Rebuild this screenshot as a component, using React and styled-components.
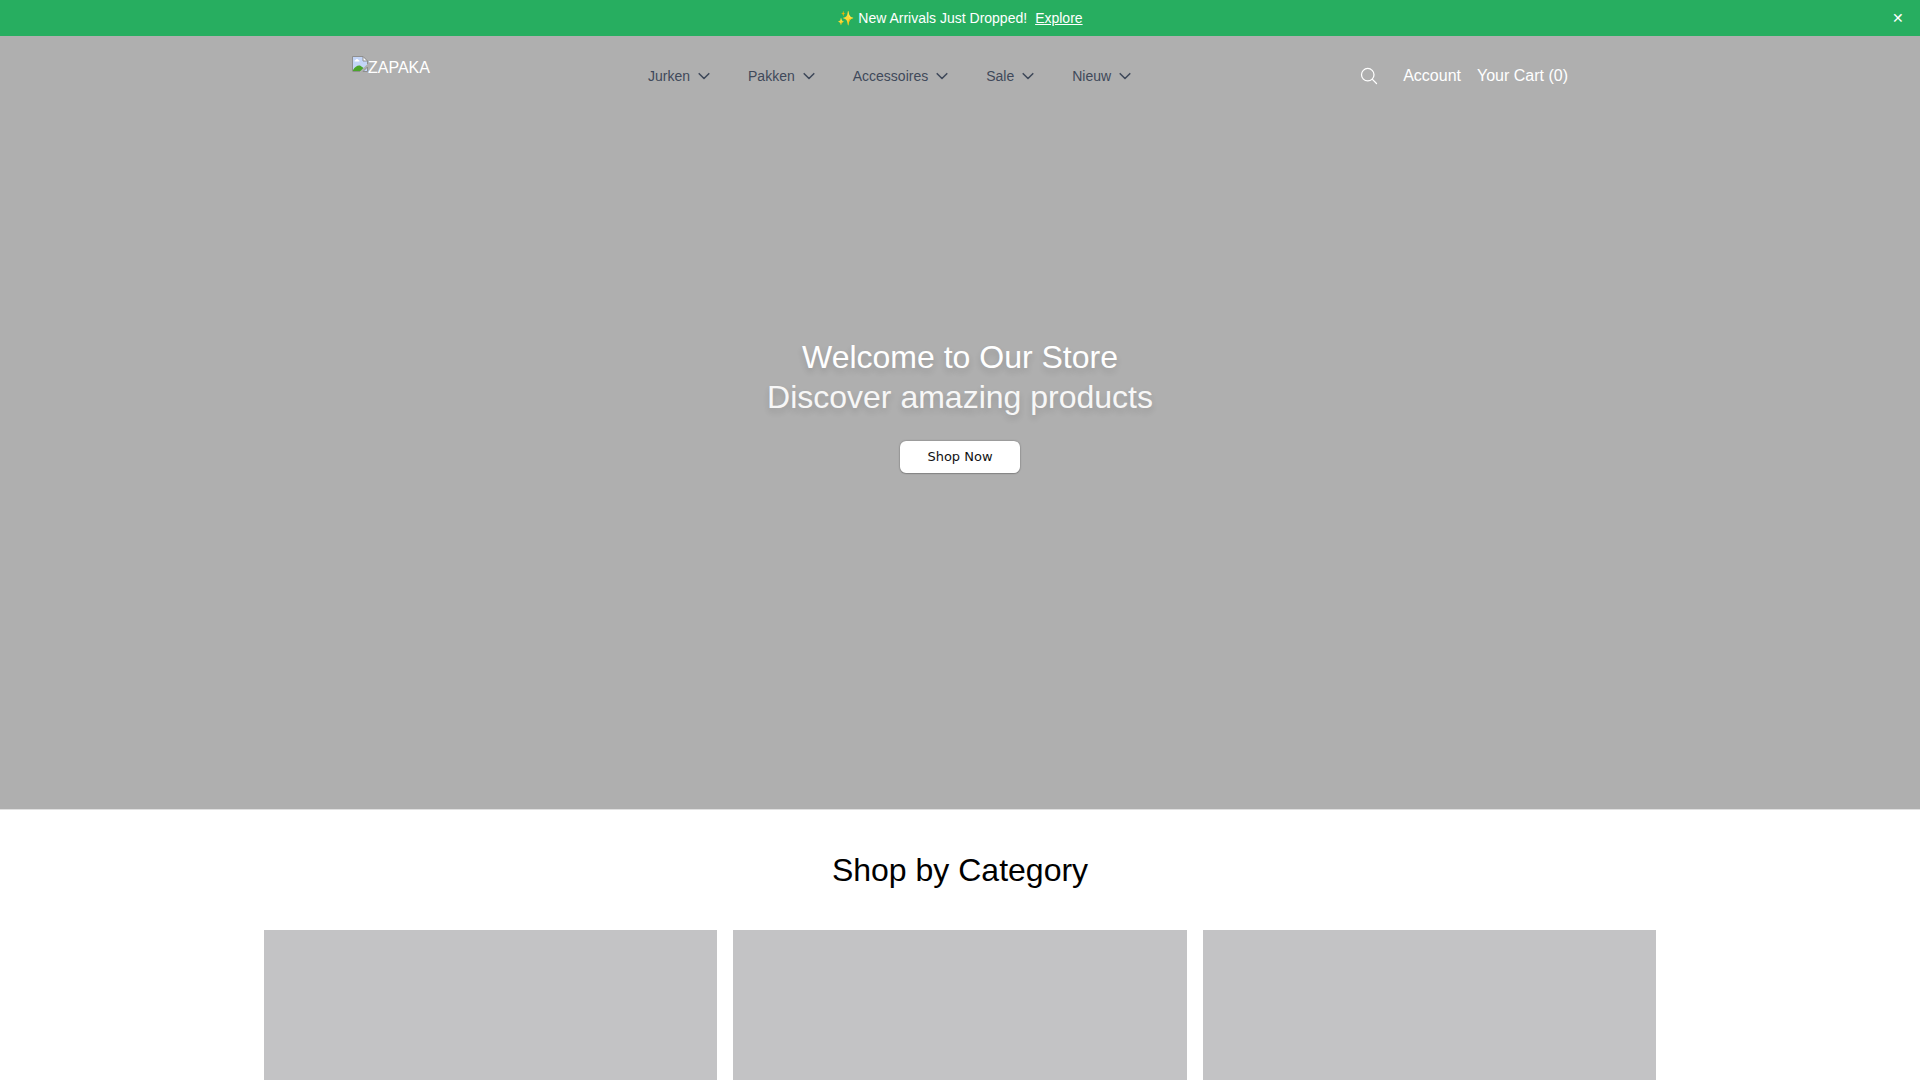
import { useState } from "react";
import styled, { createGlobalStyle } from "styled-components";

const navItems = ["Jurken", "Pakken", "Accessoires", "Sale", "Nieuw"];
const categories = ["Jurken", "Pakken", "Accessoires"];

const Chevron = () => (
  <svg width="16" height="16" viewBox="0 0 16 16" fill="none" stroke="currentColor" strokeWidth="1.6" strokeLinecap="round" strokeLinejoin="round" aria-hidden="true">
    <path d="M3.2 5.7L8 10.5L12.8 5.7" />
  </svg>
);

const SearchIcon = () => (
  <svg width="20" height="20" viewBox="0 0 24 24" fill="none" stroke="currentColor" strokeWidth="1.5" strokeLinecap="round" strokeLinejoin="round" aria-hidden="true">
    <path d="M21 21l-5.197-5.197m0 0A7.5 7.5 0 105.196 5.196a7.5 7.5 0 0010.607 10.607z" />
  </svg>
);

const ImageIcon = () => (
  <svg width="16" height="16" viewBox="0 0 16 16" aria-hidden="true">
    <path d="M1 1h9.5L15 5v3.500L8.500 15H1z" fill="#c3d5f7" />
    <path d="M2.500 5.500a1.300 1.300 0 0 1 1-1.500 1.700 1.700 0 0 1 3 0A1.300 1.300 0 0 1 7.500 5.500z" fill="#fff" />
    <path d="M1 15v-1C3 10.500 5.500 9 8 9.500L11.500 12 8.500 15z" fill="#4ba52b" />
    <path d="M.5 15.500V.5h10.500L15.500 5v3" fill="none" stroke="#8f8f8f" />
    <path d="M1 15.500h7" stroke="#8f8f8f" />
    <path d="M11 .5v4.500h4.500z" fill="#fff" stroke="#8f8f8f" />
    <path d="M15.500 11v4.500H11z" fill="#c3d5f7" stroke="#8f8f8f" />
  </svg>
);

const App = () => {
  const [showBanner, setShowBanner] = useState(true);

  return (
    <>
      <GlobalStyle />
      <Top>
        {showBanner && (
          <Banner>
            <p>
              ✨ New Arrivals Just Dropped!
              <a href="#new">Explore</a>
            </p>
            <button type="button" aria-label="Close" onClick={() => setShowBanner(false)}>✕</button>
          </Banner>
        )}
        <Header>
          <Logo href="#home">
            <ImageIcon />
            <span>ZAPAKA</span>
          </Logo>
          <Nav>
            {navItems.map((item) => (
              <NavButton type="button" key={item}>
                {item}
                <Chevron />
              </NavButton>
            ))}
          </Nav>
          <Actions>
            <SearchButton type="button" aria-label="Search">
              <SearchIcon />
            </SearchButton>
            <a href="#account">Account</a>
            <a href="#cart">Your Cart (0)</a>
          </Actions>
        </Header>
      </Top>
      <Hero>
        <h1>Welcome to Our Store</h1>
        <p>Discover amazing products</p>
        <ShopButton type="button">Shop Now</ShopButton>
      </Hero>
      <Categories>
        <h2>Shop by Category</h2>
        <Grid>
          {categories.map((name) => (
            <Card href="#category" key={name} aria-label={name} />
          ))}
        </Grid>
      </Categories>
    </>
  );
};

const GlobalStyle = createGlobalStyle`
  * {
    box-sizing: border-box;
    margin: 0;
    padding: 0;
  }

  body {
    background: #fff;
    color: #000;
    font-family: "Liberation Sans", Arial, sans-serif;
    font-size: 16px;
    line-height: 24px;
  }

  a {
    color: inherit;
    text-decoration: none;
  }

  button {
    border: 0;
    background: none;
    color: inherit;
    font: inherit;
    cursor: pointer;
  }

  svg {
    display: block;
    flex-shrink: 0;
  }
`;

/* lies over the hero */
const Top = styled.div`
  position: absolute;
  top: 0;
  left: 0;
  right: 0;
  color: #fff;
`;

const Banner = styled.div`
  display: grid;
  grid-template-columns: 1fr auto 1fr;
  align-items: center;
  height: 36px;
  padding: 0 16px;
  background: #27ae60;
  font-size: 14px;
  line-height: 20px;

  p {
    grid-column: 2;
  }

  a {
    margin-left: 8px;
    text-decoration: underline;
  }

  button {
    justify-self: end;
  }
`;

const Header = styled.header`
  display: flex;
  align-items: center;
  justify-content: space-between;
  max-width: 1280px;
  height: 80px;
  margin: 0 auto;
  padding: 0 32px;
`;

const Logo = styled.a`
  display: flex;
  align-items: flex-start;
  height: 40px;
`;

const Nav = styled.nav`
  display: flex;
  gap: 36px;
  color: #3f495a;
`;

const NavButton = styled.button`
  display: flex;
  align-items: center;
  gap: 6px;
  font-size: 14px;
  line-height: 20px;
`;

const Actions = styled.div`
  display: flex;
  align-items: center;
  gap: 16px;
`;

const SearchButton = styled.button`
  padding: 8px;
`;

const Hero = styled.section`
  display: flex;
  flex-direction: column;
  align-items: center;
  justify-content: center;
  min-height: 75vh;
  border-bottom: 1px solid #e0e0e0;
  background: #afafaf;
  color: #fff;
  text-align: center;

  h1,
  p {
    font-size: 32px;
    font-weight: 400;
    line-height: 40px;
    text-shadow: 0 4px 6px rgba(0, 0, 0, 0.14);
  }

  p {
    margin-bottom: 24px;
    opacity: 0.9;
  }
`;

const ShopButton = styled.button`
  min-width: 120px;
  height: 32px;
  border-radius: 6px;
  background: #fff;
  box-shadow: 0 0 2px rgba(0, 0, 0, 0.4), 0 1px 1px rgba(0, 0, 0, 0.15);
  color: #111;
  font-family: "DejaVu Sans", sans-serif;
  font-size: 13px;
`;

const Categories = styled.section`
  max-width: 1440px;
  margin: 0 auto;
  padding: 40px 24px;

  h2 {
    margin-bottom: 40px;
    font-size: 32px;
    font-weight: 400;
    line-height: 40px;
    text-align: center;
  }
`;

const Grid = styled.div`
  display: grid;
  grid-template-columns: repeat(3, 1fr);
  gap: 16px;
`;

const Card = styled.a`
  aspect-ratio: 1;
  background: #c3c3c5;
`;

export default App;
